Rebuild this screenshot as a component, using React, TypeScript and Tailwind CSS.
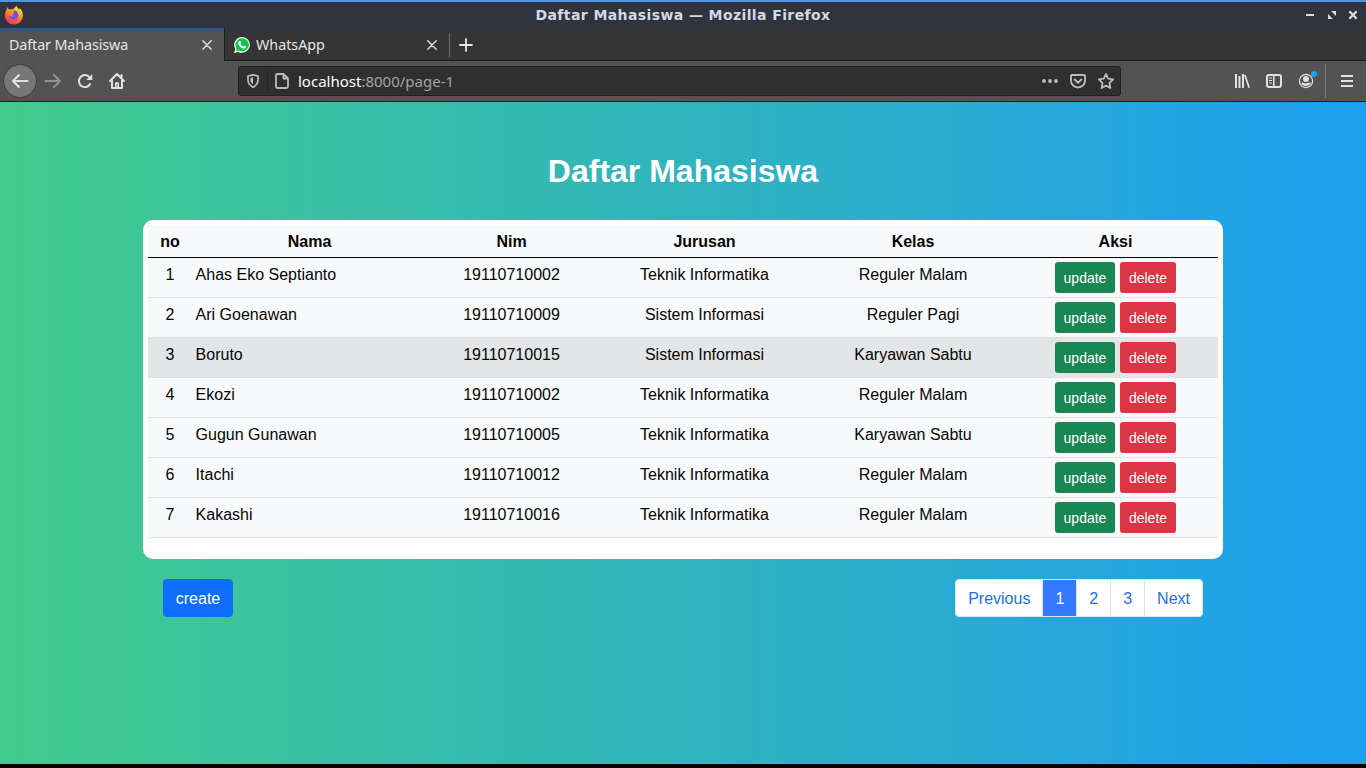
import React from "react";

const students = [
  ["Ahas Eko Septianto", "19110710002", "Teknik Informatika", "Reguler Malam"],
  ["Ari Goenawan", "19110710009", "Sistem Informasi", "Reguler Pagi"],
  ["Boruto", "19110710015", "Sistem Informasi", "Karyawan Sabtu"],
  ["Ekozi", "19110710002", "Teknik Informatika", "Reguler Malam"],
  ["Gugun Gunawan", "19110710005", "Teknik Informatika", "Karyawan Sabtu"],
  ["Itachi", "19110710012", "Teknik Informatika", "Reguler Malam"],
  ["Kakashi", "19110710016", "Teknik Informatika", "Reguler Malam"],
];

const columns = "grid grid-cols-[44px_235px_169px_217px_200px_205px]";

function FirefoxLogo() {
  return (
    <svg width="20" height="20" viewBox="0 0 20 20">
      <defs>
        <linearGradient id="ff" x1="0.8" y1="0" x2="0.3" y2="1">
          <stop offset="0" stopColor="#fff14a" />
          <stop offset="0.4" stopColor="#ffa22e" />
          <stop offset="0.7" stopColor="#ff5a38" />
          <stop offset="1" stopColor="#f3306c" />
        </linearGradient>
      </defs>
      <path fill="url(#ff)" d="M12.600 .5c.2 1.800 1.500 2.800 2.600 3.900.5-.2.5-.8.400-1.300 2 1.700 3.400 4.600 3.300 7.500A9 8.900 0 0 1 .9 10.600C.9 8 1.600 6 2.700 4.400l.4-2.100 2 2.100c1-.3 1.900-.1 2.700.2 1.500-.3 3.200-1.900 4.800-4.100z" />
      <path fill="#7050d6" d="M9.500 5.600c2.700-.3 4.800 1.700 4.700 4.600a4.400 4.400 0 0 1-8.800.2c.1-1 .5-1.800 1.100-2.300l2.700-.3z" />
      <path fill="#ff8335" d="M4.400 6.500c1.900-.8 3.500-.1 4.300.8l2 .2c-.2 1.300-2 1.300-2.400 2.200.3.700 1.200 1.100 2.200.9-.8 1.200-2.800 1.300-4.300.2-1.400-1-2-2.600-1.800-4.300z" />
    </svg>
  );
}

function WhatsAppLogo() {
  return (
    <svg width="16" height="16" viewBox="0 0 16 16">
      <path fill="#fff" d="M8.100 0A7.900 7.900 0 0 0 1.300 11.900L.1 16l4.200-1.100A7.900 7.900 0 1 0 8.100 0z" />
      <path fill="#12c24c" d="M8.100 1.300a6.600 6.600 0 0 0-5.600 10.100l-.7 2.700 2.800-.7A6.600 6.600 0 1 0 8.100 1.300z" />
      <path fill="#fff" d="M5.500 4.100c.5-.2.9-.1 1.100.4l.6 1.400c0 .5-.6.800-.7 1.100.6 1.200 1.600 2.100 2.900 2.600.4-.2.700-1 1.100-.9l1.600.8c.2.900-.5 2-1.700 2.100C7.500 11.900 3.900 8.100 4.200 6c.1-.9.600-1.600 1.300-1.900z" />
    </svg>
  );
}

function TabClose() {
  return (
    <svg width="10" height="10" viewBox="0 0 10 10" stroke="#dadada" strokeWidth="1.500" strokeLinecap="round">
      <path d="M.8.8l8.400 8.400M9.200.8L.8 9.200" />
    </svg>
  );
}

function TitleBar() {
  return (
    <div className="grid h-7 grid-cols-[1fr_auto_1fr] items-center border-t-2 border-[#5294e2] bg-[#2f343f] text-[#d3dae3]">
      <div className="pl-1"><FirefoxLogo /></div>
      <div className="text-[14px] font-bold leading-[26px] tracking-[0.4px] [font-family:'DejaVu_Sans',sans-serif]">Daftar Mahasiswa — Mozilla Firefox</div>
      <div className="flex items-center justify-end pr-[9px]">
        <svg width="52" height="10" viewBox="0 0 52 10" fill="#d8dfe9">
          <path d="M1 4h8v2H1z" />
          <path d="M26 1h5v5zM23 4l5 5h-5z" />
          <path d="M44.300 1.300l7.400 7.400M51.700 1.300l-7.400 7.400" stroke="#d8dfe9" strokeWidth="2.200" />
        </svg>
      </div>
    </div>
  );
}

function Tabs() {
  return (
    <div className="flex h-[33px] bg-[#353535] text-[#e6e6e6] [font-family:'Noto_Sans',sans-serif]">
      <div className="flex w-56 items-center justify-between border-t-[3px] border-[#315687] bg-[#535353] pb-[3px] pl-[9px] pr-3">
        <span className="text-[14.300px] leading-5 tracking-[-0.1px]">Daftar Mahasiswa</span>
        <TabClose />
      </div>
      <div className="flex flex-1 items-center border-b border-l border-[#1e1e1e] pt-px">
        <span className="ml-[9px]"><WhatsAppLogo /></span>
        <span className="ml-1.5 w-[171px] text-[14.300px] leading-5">WhatsApp</span>
        <TabClose />
        <span className="ml-3 h-6 w-px bg-[#6c6c6c]" />
        <svg className="ml-[9px]" width="14" height="14" viewBox="0 0 14 14" stroke="#e6e6e6" strokeWidth="1.800" strokeLinecap="round">
          <path d="M7 1v12M1 7h12" />
        </svg>
      </div>
    </div>
  );
}

function Toolbar() {
  return (
    <div className="flex h-[41px] items-center border-b border-[#202020] bg-[#535353] text-[#e1e1e1]">
      <div className="ml-1 flex h-8 w-8 items-center justify-center rounded-full bg-[#777777] ring-1 ring-[#3f3f3f]">
        <svg width="18" height="18" viewBox="0 0 18 18" fill="none" stroke="currentColor" strokeWidth="2" strokeLinecap="round" strokeLinejoin="round">
          <path d="M16.500 9H2M8 3L2 9l6 6" />
        </svg>
      </div>
      <svg className="ml-2" width="18" height="18" viewBox="0 0 18 18" fill="none" stroke="#929292" strokeWidth="2" strokeLinecap="round" strokeLinejoin="round">
        <path d="M1.500 9H16M10 3l6 6-6 6" />
      </svg>
      <svg className="ml-[15px]" width="16" height="16" viewBox="0 0 16 16" fill="none" stroke="currentColor" strokeWidth="2" strokeLinecap="round">
        <path d="M13.200 11A6 6 0 1 1 12.600 4.300" />
        <path d="M15.300 1v6H9.300z" fill="currentColor" stroke="none" />
      </svg>
      <svg className="ml-4" width="16" height="16" viewBox="0 0 16 16" fill="none" stroke="currentColor" strokeWidth="2" strokeLinecap="round" strokeLinejoin="round">
        <path d="M1 8l7-7 7 7M3 7.500V15h10V7.500M12.500 2v3" />
        <path d="M6.800 14v-4h2.400v4" strokeWidth="1.700" />
      </svg>
      <div className="ml-[113px] flex h-[30px] w-[883px] items-center rounded-[3px] border border-[#202020] bg-[#2f2f2f] text-[#bcbcbc]">
        <svg className="ml-2" width="12" height="14" viewBox="0 0 12 14" fill="none" stroke="currentColor" strokeWidth="1.700" strokeLinejoin="round">
          <path d="M1 2l5-1.200L11 2v4.300c0 3-2 5.300-5 7-3-1.700-5-4-5-7z" />
          <path d="M6 3.300v7C4.300 9.200 3.500 8 3.500 6.200V4z" fill="currentColor" stroke="none" />
        </svg>
        <span className="ml-2 h-5 w-px bg-[#222]" />
        <svg className="ml-[7px]" width="14" height="16" viewBox="0 0 14 16" fill="none" stroke="currentColor" strokeWidth="1.800" strokeLinejoin="round">
          <path d="M2.500 1h6L13 5.500v8c0 1-.5 1.500-1.500 1.500h-9C1.500 15 1 14.500 1 13.500v-11C1 1.500 1.500 1 2.500 1z" />
          <path d="M8.500 1v4.500H13" />
        </svg>
        <div className="ml-[9px] flex-1 text-[15px] leading-5 text-[#a3a3a3] [font-family:'Noto_Sans',sans-serif]"><span className="text-white">localhost</span>:8000/page-1</div>
        <svg width="16" height="16" viewBox="0 0 16 16" fill="currentColor"><circle cx="2" cy="8" r="1.900" /><circle cx="8" cy="8" r="1.900" /><circle cx="14" cy="8" r="1.900" /></svg>
        <svg className="ml-3" width="16" height="16" viewBox="0 0 16 16" fill="none" stroke="currentColor" strokeWidth="1.900" strokeLinecap="round" strokeLinejoin="round">
          <path d="M2 2h12c.6 0 1 .4 1 1v4.500a7 7 0 0 1-14 0V3c0-.6.4-1 1-1z" />
          <path d="M4.700 6.500L8 9.700l3.300-3.200" />
        </svg>
        <svg className="ml-3 mr-1.5" width="16" height="16" viewBox="0 0 16 16" fill="none" stroke="currentColor" strokeWidth="1.800" strokeLinejoin="round">
          <path d="M8 1l2.200 4.700 5 .7-3.700 3.500.9 5.100L8 12.600 3.600 15l.9-5.100L.8 6.400l5-.7z" />
        </svg>
      </div>
      <svg className="ml-[113px]" width="16" height="16" viewBox="0 0 16 16" fill="none" stroke="currentColor">
        <path d="M2 1v14M5.500 3v12M9 1v14" strokeWidth="2" />
        <path d="M10.800 2L15.200 14.800" strokeWidth="1.700" />
      </svg>
      <svg className="ml-4" width="16" height="16" viewBox="0 0 16 16" fill="none" stroke="currentColor" strokeWidth="2">
        <rect x="1" y="2" width="14" height="12" rx="2" />
        <path d="M7.800 2v12" strokeWidth="1.500" />
        <path d="M3 5h3M3 7.500h3M3 10h3" strokeWidth="1" />
      </svg>
      <div className="relative ml-4 h-4 w-4">
        <svg width="16" height="16" viewBox="0 0 16 16" fill="none">
          <circle cx="8" cy="8" r="6.600" stroke="currentColor" strokeWidth="1.200" />
          <circle cx="8" cy="6" r="3" fill="currentColor" />
          <path d="M3.200 10c1-.9 2-.4 2.800.1 1.300.6 2.700.6 4 0 .8-.5 1.800-1 2.800-.1-.8 1.800-2.500 3-4.800 3s-4-1.200-4.800-3z" fill="currentColor" />
        </svg>
        <span className="absolute -top-[2px] left-[13px] h-[6px] w-[6px] rounded-full bg-[#16a5ef]" />
      </div>
      <span className="ml-[11px] h-[34px] w-px bg-[#7a7a7a]" />
      <svg className="ml-[15px]" width="12" height="12" viewBox="0 0 12 12" fill="currentColor"><path d="M0 0h12v2H0zM0 5h12v2H0zM0 10h12v2H0z" /></svg>
    </div>
  );
}

function PageLink({ label, active }: { label: string; active?: boolean }) {
  return (
    <button className={active
      ? "-ml-px h-[38px] border border-[#dee2e6] bg-[#3478ff] px-3 pt-0.5 text-white"
      : "-ml-px h-[38px] border border-[#dee2e6] bg-white px-3 pt-0.5 text-[#1b6df2] first:ml-0 first:rounded-l last:rounded-r"}>
      {label}
    </button>
  );
}

export default function App() {
  return (
    <div className="flex h-[768px] w-[1366px] flex-col overflow-hidden bg-black">
      <TitleBar />
      <Tabs />
      <Toolbar />
      <main className="h-[662px] bg-linear-to-r/srgb from-[#43cb8d] to-[#1d9eef] px-[143px] text-[16px] leading-6 text-[#050505] [font-family:'Liberation_Sans',sans-serif]">
        <h1 className="pt-[50px] text-center text-[32px] font-bold leading-[38px] text-white">Daftar Mahasiswa</h1>
        <section className="mt-[30px] h-[339px] rounded-[10px] bg-white p-[5px]">
          <div className={`${columns} h-[33px] border-b border-black bg-[#f8f9fa] pt-[5px] text-center font-bold`}>
            <span>no</span><span>Nama</span><span>Nim</span><span>Jurusan</span><span>Kelas</span><span>Aksi</span>
          </div>
          {students.map(([name, nim, major, group], i) => (
            <div key={name} className={`${columns} h-10 border-b border-[#dfe0e1] pt-1 text-center ${i === 2 ? "bg-[#e4e5e6]" : "bg-[#f8f9fa]"}`}>
              <span className="pt-px">{i + 1}</span>
              <span className="pl-[3.600px] pt-px text-left">{name}</span>
              <span className="pt-px">{nim}</span>
              <span className="pt-px">{major}</span>
              <span className="pt-px">{group}</span>
              <span className="flex justify-center gap-[5px] text-[14px] leading-[29px] text-white">
                <button className="h-[31px] w-[60px] rounded-[3px] bg-[#198754] pt-0.5">update</button>
                <button className="h-[31px] w-14 rounded-[3px] bg-[#dc3545] pt-0.5">delete</button>
              </span>
            </div>
          ))}
        </section>
        <div className="flex justify-between px-5 pt-5">
          <button className="h-[38px] w-[70px] rounded bg-[#0d6efd] pt-0.5 text-white">create</button>
          <nav className="flex">
            <PageLink label="Previous" />
            <PageLink label="1" active />
            <PageLink label="2" />
            <PageLink label="3" />
            <PageLink label="Next" />
          </nav>
        </div>
      </main>
    </div>
  );
}
